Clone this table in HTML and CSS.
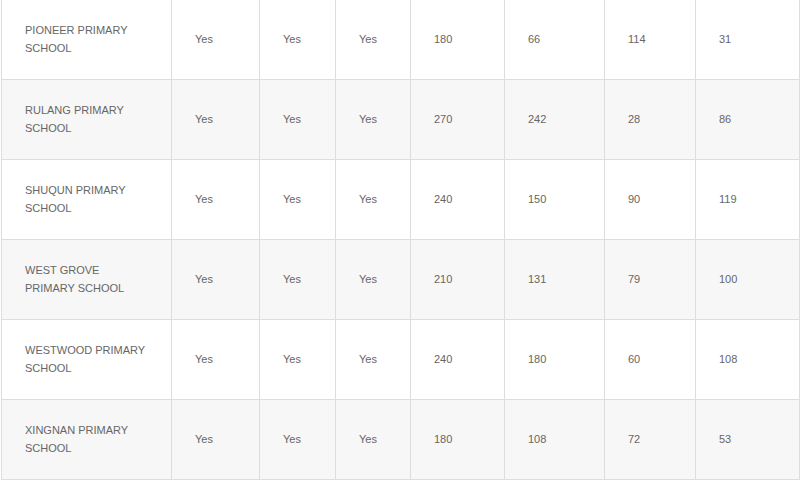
FILE: index.html
```html
<!DOCTYPE html>
<html>
<head>
<meta charset="utf-8">
<link rel="stylesheet" href="styles.css">
</head>
<body>
<div class="wrap">
<table class="schools">
<colgroup>
<col class="c1"><col class="c2"><col class="c3"><col class="c4"><col class="c5"><col class="c6"><col class="c7"><col class="c8">
</colgroup>
<tbody>
<tr><td>PIONEER PRIMARY SCHOOL</td><td>Yes</td><td>Yes</td><td>Yes</td><td>180</td><td>66</td><td>114</td><td>31</td></tr>
<tr><td>RULANG PRIMARY SCHOOL</td><td>Yes</td><td>Yes</td><td>Yes</td><td>270</td><td>242</td><td>28</td><td>86</td></tr>
<tr><td>SHUQUN PRIMARY SCHOOL</td><td>Yes</td><td>Yes</td><td>Yes</td><td>240</td><td>150</td><td>90</td><td>119</td></tr>
<tr><td>WEST GROVE PRIMARY SCHOOL</td><td>Yes</td><td>Yes</td><td>Yes</td><td>210</td><td>131</td><td>79</td><td>100</td></tr>
<tr><td>WESTWOOD PRIMARY SCHOOL</td><td>Yes</td><td>Yes</td><td>Yes</td><td>240</td><td>180</td><td>60</td><td>108</td></tr>
<tr><td>XINGNAN PRIMARY SCHOOL</td><td>Yes</td><td>Yes</td><td>Yes</td><td>180</td><td>108</td><td>72</td><td>53</td></tr>
</tbody>
</table>
</div>
</body>
</html>
```
FILE: styles.css
```css
html, body {
  margin: 0;
  padding: 0;
  background: #fff;
}
.wrap {
  padding: 0 1px;
  margin-top: -1px;
}
.schools {
  width: 798px;
  border-collapse: collapse;
  table-layout: fixed;
  font-family: "Liberation Sans", Arial, sans-serif;
  font-size: 11px;
  line-height: 18px;
  color: #666;
}
.schools td {
  border: 1px solid #ddd;
  height: 80px;
  padding: 0 23px 2px 23px;
  box-sizing: border-box;
  vertical-align: middle;
  text-align: left;
}
.schools tr:nth-child(even) td {
  background: #f7f7f7;
}
.c1 { width: 170px; }
.c2 { width: 88px; }
.c3 { width: 76px; }
.c4 { width: 75px; }
.c5 { width: 94px; }
.c6 { width: 100px; }
.c7 { width: 91px; }
.c8 { width: 104px; }
```
